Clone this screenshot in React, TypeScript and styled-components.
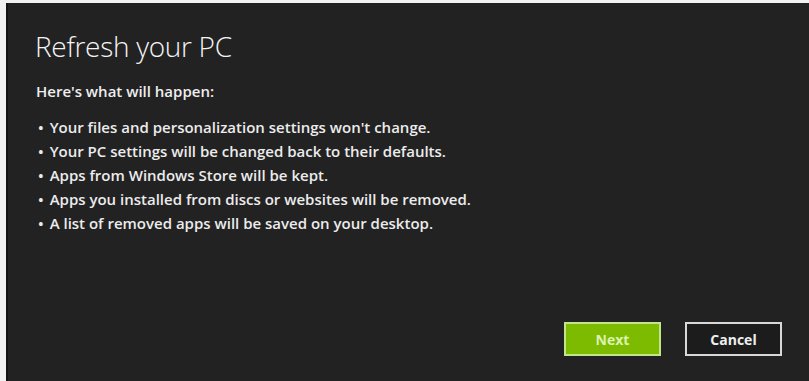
import React from "react";
import styled, { createGlobalStyle } from "styled-components";

const Global = createGlobalStyle`
  html, body { margin: 0; padding: 0; background: #f4f4f4; }
  #root { width: 809px; height: 381px; }
`;

const Frame = styled.div`
  box-sizing: border-box;
  width: 809px;
  height: 381px;
  padding: 3px 0 0 6px;
  background: #f2f2f2;
`;

const Dialog = styled.div`
  box-sizing: border-box;
  height: 100%;
  background: #222222;
  border-left: 2px solid #151515;
  display: flex;
  flex-direction: column;
  padding: 25px 27px 25px 27px;
  font-family: "Open Sans", "Noto Sans", sans-serif;
  color: #f0f0f0;
`;

const Title = styled.h1`
  margin: 0;
  font-size: 28px;
  font-weight: 300;
  line-height: 36px;
  letter-spacing: -0.3px;
  color: #f4f4f4;
`;

const Lead = styled.p`
  margin: 17px 0 0 1px;
  font-size: 15px;
  font-weight: 600;
  line-height: 20px;
  color: #eeeeee;
`;

const List = styled.ul`
  list-style: none;
  margin: 14px 0 0 0;
  padding: 0 0 0 3px;
`;

const Item = styled.li`
  font-size: 15px;
  font-weight: 600;
  line-height: 24px;
  color: #ececec;
  &::before {
    content: "•";
    margin-right: 6px;
  }
`;

const Footer = styled.div`
  margin-top: auto;
  display: flex;
  justify-content: flex-end;
  gap: 24px;
`;

const Button = styled.button<{ $primary?: boolean }>`
  box-sizing: border-box;
  width: 97px;
  height: 34px;
  border: 2px solid ${(p) => (p.$primary ? "#c2e58c" : "#d8d8d8")};
  background: ${(p) => (p.$primary ? "#7cbb00" : "#1c1c1c")};
  color: ${(p) => (p.$primary ? "#dcf2b0" : "#eeeeee")};
  font-family: "Open Sans", "Noto Sans", sans-serif;
  font-weight: 700;
  font-size: 14px;
  padding: 0;
`;

const items = [
  "Your files and personalization settings won't change.",
  "Your PC settings will be changed back to their defaults.",
  "Apps from Windows Store will be kept.",
  "Apps you installed from discs or websites will be removed.",
  "A list of removed apps will be saved on your desktop.",
];

export default function App() {
  return (
    <>
      <Global />
      <Frame>
        <Dialog>
          <Title>Refresh your PC</Title>
          <Lead>Here's what will happen:</Lead>
          <List>
            {items.map((t) => (
              <Item key={t}>{t}</Item>
            ))}
          </List>
          <Footer>
            <Button $primary>Next</Button>
            <Button>Cancel</Button>
          </Footer>
        </Dialog>
      </Frame>
    </>
  );
}
